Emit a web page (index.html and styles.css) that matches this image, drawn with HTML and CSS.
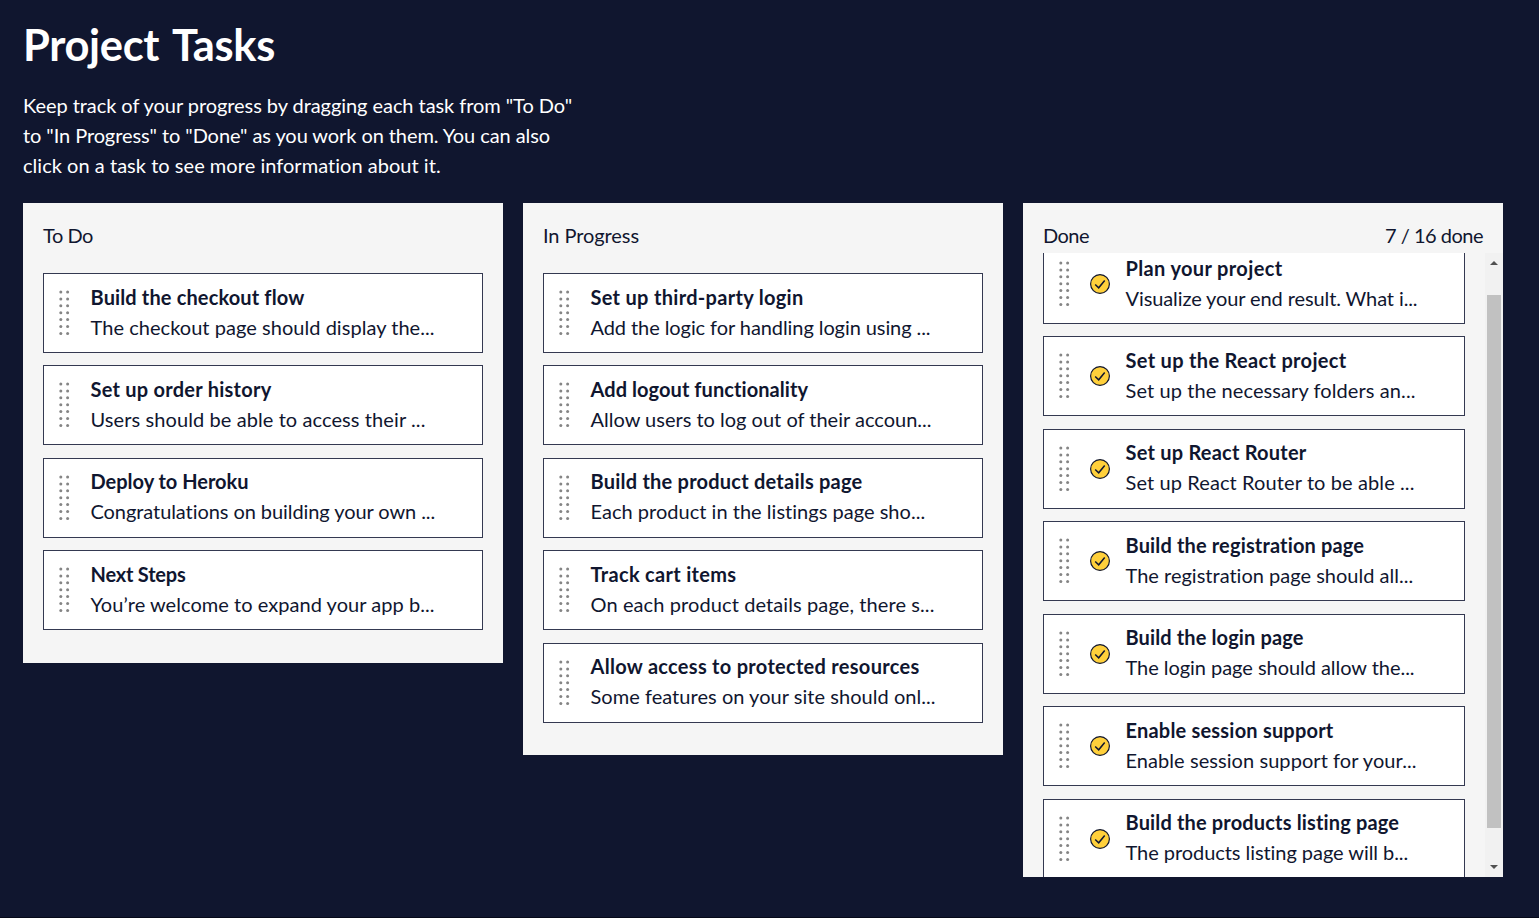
FILE: index.html
```html
<!DOCTYPE html>
<html lang="en">
<head>
<meta charset="utf-8">
<title>Project Tasks</title>
<link rel="stylesheet" href="styles.css">
</head>
<body>
<main class="page">
  <h1 class="title"><span data-w="252">Project Tasks</span></h1>
  <p class="intro">
    <span class="line" data-w="549">Keep track of your progress by dragging each task from "To Do"</span>
    <span class="line" data-w="527">to "In Progress" to "Done" as you work on them. You can also</span>
    <span class="line" data-w="418">click on a task to see more information about it.</span>
  </p>
  <div class="board" id="board"></div>
</main>
<script src="board.js"></script>
</body>
</html>
```
FILE: styles.css
```css
* { box-sizing: border-box; }
body {
  margin: 0;
  height: 918px;
  overflow: hidden;
  background: #10162f;
  color: #10162f;
  font: 20px/30px Lato, "Open Sans", sans-serif;
  white-space: nowrap;
  border-bottom: 1px solid #060919;
}
.page { padding: 18px 36px 0 23px; color: #fff; }
.title { margin: 0; font-size: 43.5px; line-height: 53px; font-weight: 700; word-spacing: 4px; }
.intro { margin: 19px 0 23px; }
.line { display: table; }
.board { display: flex; align-items: flex-start; gap: 20px; color: #10162f; }
.column { width: 480px; background: #f5f5f5; }
.column-head { display: flex; justify-content: space-between; height: 50px; padding: 17px 20px 0; }
.list { padding: 20px 20px 20px; }
.card {
  display: flex;
  align-items: center;
  height: 80px;
  margin-bottom: 12.45px;
  padding: 0 14px;
  background: #fff;
  border: 1px solid #343951;
}
.grip { width: 12px; height: 46px; flex: none; fill: #858585; }
.check { width: 20px; height: 20px; flex: none; margin-left: 20px; }
.text { margin: 0 0 3px 20.5px; }
.check + .text { margin-left: 15.5px; }
.name, .desc { display: block; width: max-content; height: 30px; }
.name { font-weight: 700; }
.scroller { display: flex; height: 624px; overflow: hidden; }
.scroller .list { width: 462px; flex: none; margin-top: -29px; }
.scrollbar {
  width: 18px;
  display: flex;
  flex-direction: column;
  align-items: center;
  justify-content: space-between;
  padding: 8px 0 8px;
  background: #f1f1f1;
}
.arrow { width: 8px; height: 4px; fill: #505050; }
.thumb { width: 14px; height: 533px; margin-bottom: 7px; background: #c1c1c1; }
```
FILE: board.js
```js
// Each task: name, name width, summary, summary width
const columns = [
  { title: 'To Do', w: 50, tasks: [
    ['Build the checkout flow', 214, 'The checkout page should display the...', 344],
    ['Set up order history', 181, 'Users should be able to access their ...', 335],
    ['Deploy to Heroku', 158, 'Congratulations on building your own ...', 345],
    ['Next Steps', 95, 'You’re welcome to expand your app b...', 344]
  ]},
  { title: 'In Progress', w: 96, tasks: [
    ['Set up third-party login', 213, 'Add the logic for handling login using ...', 340],
    ['Add logout functionality', 218, 'Allow users to log out of their accoun...', 341],
    ['Build the product details page', 272, 'Each product in the listings page sho...', 335],
    ['Track cart items', 146, 'On each product details page, there s...', 344],
    ['Allow access to protected resources', 329, 'Some features on your site should onl...', 345]
  ]},
  { title: 'Done', w: 46, done: true, tasks: [
    ['Plan your project', 157, 'Visualize your end result. What i...', 292],
    ['Set up the React project', 221, 'Set up the necessary folders an...', 290],
    ['Set up React Router', 181, 'Set up React Router to be able ...', 289],
    ['Build the registration page', 239, 'The registration page should all...', 288],
    ['Build the login page', 178, 'The login page should allow the...', 289],
    ['Enable session support', 208, 'Enable session support for your...', 291],
    ['Build the products listing page', 274, 'The products listing page will b...', 283]
  ]}
];

let dots = '';
for (let i = 0; i < 7; i++) {
  const y = 2 + i * 6.9;
  dots += `<circle cx="2.8" cy="${y}" r="1.5"/><circle cx="9.6" cy="${y}" r="1.5"/>`;
}
const grip = `<svg class="grip" viewBox="0 0 12 46">${dots}</svg>`;
const check = `<svg class="check" viewBox="0 0 20 20"><circle cx="10" cy="10" r="9.4" fill="#ffd03b" stroke="#10162f" stroke-width="1.2"/><path d="M5.2 10.5 8.7 13.8 14.7 6.5" fill="none" stroke="#10162f" stroke-width="1.5"/></svg>`;

const card = (t, done) => `<article class="card">${grip}${done ? check : ''}<div class="text">
  <span class="name" data-w="${t[1]}">${t[0]}</span><span class="desc" data-w="${t[3]}">${t[2]}</span></div></article>`;

document.getElementById('board').innerHTML = columns.map(c => {
  const list = `<div class="list">${c.tasks.map(t => card(t, c.done)).join('')}</div>`;
  const body = c.done ? `<div class="scroller">${list}<div class="scrollbar">
    <svg class="arrow" viewBox="0 0 8 4"><path d="M0 4 4 0 8 4z"/></svg><div class="thumb"></div>
    <svg class="arrow" viewBox="0 0 8 4"><path d="M0 0 4 4 8 0z"/></svg></div></div>` : list;
  const count = c.done ? '<span data-w="98">7 / 16 done</span>' : '';
  return `<section class="column"><header class="column-head"><span data-w="${c.w}">${c.title}</span>${count}</header>${body}</section>`;
}).join('');

// Track each label so that it fills its set width
document.querySelectorAll('[data-w]').forEach(el => {
  const gap = el.dataset.w - el.getBoundingClientRect().width;
  el.style.letterSpacing = gap / el.textContent.length + 'px';
});
```
